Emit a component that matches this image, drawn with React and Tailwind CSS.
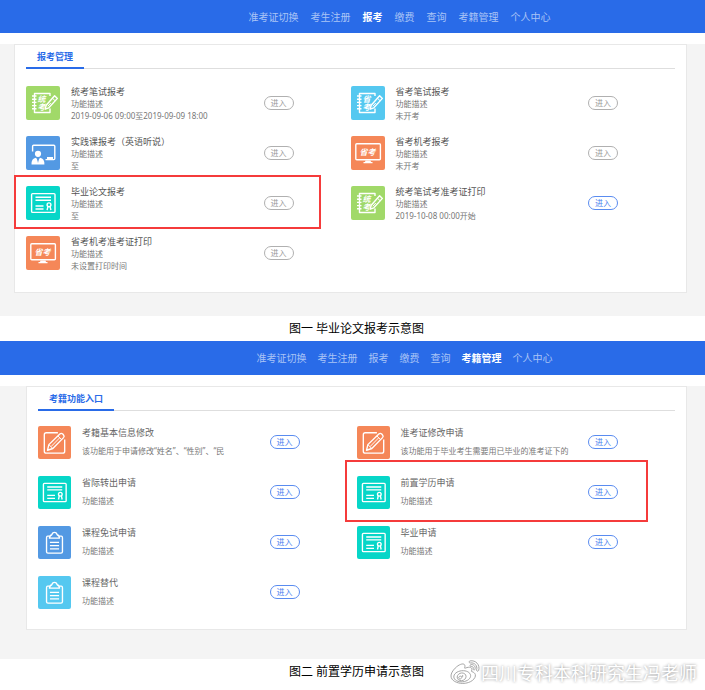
import { FaWeibo } from 'react-icons/fa'

const NAV_ITEMS = ['准考证切换', '考生注册', '报考', '缴费', '查询', '考籍管理', '个人中心']

const EXAM_ITEMS = [
  { title: '统考笔试报考', note: '2019-09-06 09:00至2019-09-09 18:00', icon: 'notebook', label: '统考', color: 'bg-[#a1d969]', disabled: true },
  { title: '省考笔试报考', note: '未开考', icon: 'notebook', label: '省考', color: 'bg-[#55c8f0]', disabled: true },
  { title: '实践课报考（英语听说）', note: '至', icon: 'teacher', color: 'bg-[#5399e3]', disabled: true },
  { title: '省考机考报考', note: '未开考', icon: 'monitor', color: 'bg-[#f58758]', disabled: true },
  { title: '毕业论文报考', note: '至', icon: 'certificate', color: 'bg-[#07d6c8]', disabled: true, mark: '-left-3 right-[30px] -top-[9px] -bottom-[7px]' },
  { title: '统考笔试考准考证打印', note: '2019-10-08 00:00开始', icon: 'notebook', label: '统考', color: 'bg-[#a1d969]' },
  { title: '省考机考准考证打印', note: '未设置打印时间', icon: 'monitor', color: 'bg-[#f58758]', disabled: true },
]

const STATUS_ITEMS = [
  { title: '考籍基本信息修改', desc: '该功能用于申请修改“姓名”、“性别”、“民', icon: 'edit', color: 'bg-[#f58758]' },
  { title: '准考证修改申请', desc: '该功能用于毕业考生需要用已毕业的准考证下的', icon: 'edit', color: 'bg-[#f58758]' },
  { title: '省际转出申请', icon: 'certificate', color: 'bg-[#07d6c8]' },
  { title: '前置学历申请', icon: 'certificate', color: 'bg-[#07d6c8]', mark: '-left-3 right-[27px] -top-3.5 -bottom-3' },
  { title: '课程免试申请', icon: 'clipboard', color: 'bg-[#5399e3]' },
  { title: '毕业申请', icon: 'certificate', color: 'bg-[#07d6c8]' },
  { title: '课程替代', icon: 'clipboard', color: 'bg-[#55c8f0]' },
]

function Drawing({ name, label }) {
  if (name === 'notebook') {
    return (
      <>
        <path d="M24 10V7.5H8.5V26.5H24V22.5" />
        <path d="M6 10h4.5M6 13.2h4.5M6 16.4h4.5M6 19.6h4.5M6 22.8h4.5" />
        <path d="M28.6 9.8l2.8 2.6-8.6 9.4-3.6 1.4 1-4z" />
        <path d="M26.4 12.2l2.8 2.6M24.8 17l-3 3.2" strokeWidth="1" />
        <text x="15.5" y="8.6" writingMode="vertical-rl" fontSize="8" fontStyle="italic" fontWeight="bold" fill="currentColor" stroke="none">
          {label}
        </text>
      </>
    )
  }
  if (name === 'monitor') {
    return (
      <>
        <rect x="4.8" y="7.8" width="24.6" height="16" rx="1" />
        <path d="M14.5 24.5h5l.5 1.5h1.5v1.2h-9V26H14z" fill="currentColor" stroke="none" />
        <text x="8.5" y="19" fontSize="8" fontStyle="italic" fontWeight="bold" fill="currentColor" stroke="none">
          省考
        </text>
      </>
    )
  }
  if (name === 'teacher') {
    return (
      <>
        <path d="M6.6 15.5V10.2q0-1 1-1H27.8q1 0 1 1V22.6q0 1-1 1H19.5" />
        <path d="M21 21h6v2h-6z" fill="currentColor" stroke="none" />
        <circle cx="12" cy="17.8" r="3.1" fill="currentColor" stroke="none" />
        <path d="M5.5 28.5q-.3-6 4.5-6.8l2 3 2-3q4.7.8 4.4 6.8z" fill="currentColor" stroke="none" />
        <path d="M12 22.5l-.8 1 .8 3.5.8-3.5z" className="fill-[#5399e3]" stroke="none" />
      </>
    )
  }
  if (name === 'certificate') {
    return (
      <>
        <rect x="5.6" y="7.6" width="23.4" height="18.8" rx="1" />
        <path d="M9.5 11.3h15.5M9.5 14.3h15.5M9.5 20h8M9.5 23h8" />
        <circle cx="23" cy="18.8" r="1.9" />
        <path d="M21.9 20.6l-.8 3.6M24.1 20.6l.8 3.6" />
      </>
    )
  }
  if (name === 'edit') {
    return (
      <>
        <path d="M20.5 7H8.5Q6.5 7 6.5 9V26Q6.5 28 8.5 28H25.5Q27.5 28 27.5 26V14" />
        <path d="M9.8 25l1.4-5.8L22.5 8.3q1.5-1.4 3 0l.8.9q1.3 1.4 0 2.8L15.3 23.2z" />
        <path d="M20.5 10.3l3.8 3.7M11.2 19.2l4.1 4M22.3 12.2l-8.8 9" strokeWidth="1" />
      </>
    )
  }
  return (
    <>
      <path d="M12 10.5H10Q8.8 10.5 8.8 12V26.5Q8.8 28 10.3 28H23.7Q25.2 28 25.2 26.5V12Q25.2 10.5 24 10.5H22" />
      <path d="M11.8 12.5Q12 9.5 14.3 9q.4-2.5 2.7-2.5T19.7 9q2.3.5 2.5 3.5z" />
      <path d="M12.3 16.8h9.4M12.3 20.2h9.4M12.3 23.6h9.4" />
    </>
  )
}

function Tile({ item, size }) {
  return (
    <div className={`${size} ${item.color} shrink-0 rounded-[2px] text-white`}>
      <svg viewBox="0 0 34 34" className="size-full" fill="none" stroke="currentColor" strokeWidth="1.4" strokeLinejoin="round">
        <Drawing name={item.icon} label={item.label} />
      </svg>
    </div>
  )
}

function EnterButton({ disabled }) {
  const tone = disabled ? 'border-[#b0b0b0] text-[#999]' : 'border-[#5a8cf0] text-[#4a80ee] cursor-pointer'
  return (
    <button
      type="button"
      disabled={disabled}
      className={`mr-[57px] h-3.5 w-[30px] shrink-0 rounded-full border bg-white text-[8px] leading-3 ${tone}`}
    >
      进入
    </button>
  )
}

function Item({ item, size, children }) {
  return (
    <li className="relative flex items-center gap-[11px]">
      <Tile item={item} size={size} />
      <div className="min-w-0 flex-1 whitespace-nowrap">{children}</div>
      <EnterButton disabled={item.disabled} />
      {item.mark && <span className={`pointer-events-none absolute border-2 border-[#f53b3b] ${item.mark}`} />}
    </li>
  )
}

function TopNav({ active, className }) {
  return (
    <nav className={`flex items-center justify-center bg-[#296be8] text-[10px] leading-4 ${className}`}>
      {NAV_ITEMS.map((name) => (
        <a key={name} href="#" className={name === active ? 'font-bold text-white' : 'text-[#a9c4f6]'}>
          {name}
        </a>
      ))}
    </nav>
  )
}

function Card({ title, className, listClass, children }) {
  return (
    <section className={`border border-[#e8e8e8] bg-white px-[11px] ${className}`}>
      <div className="flex border-b border-[#dedede]">
        <h2 className="-mb-px border-b-2 border-[#296be8] px-[11px] pt-1 pb-0.5 text-[9px] leading-4 font-bold text-[#296be8]">
          {title}
        </h2>
      </div>
      <ul className={`grid grid-cols-2 ${listClass}`}>{children}</ul>
    </section>
  )
}

export default function App() {
  return (
    <div className="bg-white font-['Noto_Sans','Noto_Sans_CJK_SC',sans-serif]">
      <TopNav active="报考" className="h-[33px] gap-3 pl-[94px]" />
      <main className="mt-[11px] bg-[#f4f4f4] pr-[18px] pb-[23px] pl-3.5">
        <Card title="报考管理" className="pb-5" listClass="mt-[15px] gap-y-3">
          {EXAM_ITEMS.map((item) => (
            <Item key={item.title} item={item} size="size-[34px]">
              <h3 className="pt-0.5 text-[9px] leading-3 text-[#555]">{item.title}</h3>
              <p className="text-[8px] leading-3 text-[#777]">功能描述</p>
              <p className="text-[8px] leading-3 text-[#777]">{item.note}</p>
            </Item>
          ))}
        </Card>
      </main>
      <p className="pl-2 text-center text-xs leading-[25px] text-black">图一 毕业论文报考示意图</p>

      <TopNav active="考籍管理" className="h-[34px] gap-[11px] pl-[104px]" />
      <main className="mt-[11px] bg-[#f4f4f4] pr-[18px] pb-[29px] pl-[26px]">
        <Card title="考籍功能入口" className="pb-[19px]" listClass="mt-[13px] gap-y-3.5">
          {STATUS_ITEMS.map((item) => (
            <Item key={item.title} item={item} size="size-[33px]">
              <h3 className="text-[9px] leading-[18px] text-[#666]">{item.title}</h3>
              <p className="text-[8px] leading-[18px] text-[#777]">{item.desc ?? '功能描述'}</p>
            </Item>
          ))}
        </Card>
      </main>
      <div className="relative">
        <p className="pl-2 text-center text-xs leading-[25px] text-black">图二 前置学历申请示意图</p>
        <div className="absolute top-0 right-2 flex items-center gap-0.5 text-lg leading-[25px] whitespace-nowrap text-white text-shadow-[0_0_3px_#888]">
          <FaWeibo className="size-7 overflow-visible fill-white stroke-[#999]" strokeWidth="16" />
          四川专科本科研究生冯老师
        </div>
      </div>
    </div>
  )
}
